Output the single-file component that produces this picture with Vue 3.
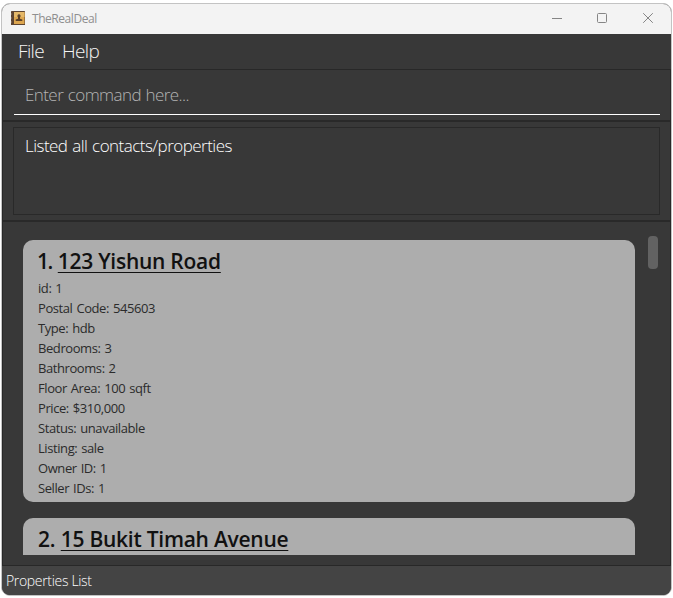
<script setup>
const properties = [
  {
    address: '123 Yishun Road',
    fields: [
      ['id', '1'], ['Postal Code', '545603'], ['Type', 'hdb'], ['Bedrooms', '3'],
      ['Bathrooms', '2'], ['Floor Area', '100 sqft'], ['Price', '$310,000'],
      ['Status', 'unavailable'], ['Listing', 'sale'], ['Owner ID', '1'], ['Seller IDs', '1'],
    ],
  },
  { address: '15 Bukit Timah Avenue', fields: [] },
]
</script>

<template>
  <div class="window">
    <header class="titlebar">
      <svg class="logo" width="14" height="14" viewBox="0 0 14 14">
        <rect width="14" height="14" rx="0.6" fill="#5d4431" />
        <rect x="3" y="1" width="10.5" height="12" fill="#dda64f" />
        <rect x="3" y="1" width="10.5" height="5" fill="#e5b868" />
        <path d="M0 3h1M0 7h1M0 11h1" stroke="#9a8270" />
        <path d="M8 3.300a1.700 1.700 0 0 1 1 3v1.500l2.300.700v1.500H4.700V8.500L7 7.800V6.300a1.700 1.700 0 0 1 1-3z" fill="#5a4028" />
      </svg>
      <span class="app-name">TheRealDeal</span>
      <div class="controls">
        <svg width="12" height="12" viewBox="0 0 12 12"><path d="M1 6.500h10" /></svg>
        <svg width="12" height="12" viewBox="0 0 12 12"><rect x="1.500" y="1.500" width="9" height="9" rx="1" /></svg>
        <svg class="close" width="12" height="12" viewBox="0 0 12 12"><path d="M1.200 1.200l9.600 9.600M10.800 1.200l-9.600 9.600" /></svg>
      </div>
    </header>
    <nav class="menu"><span class="file">File</span><span class="help">Help</span></nav>
    <main class="body">
      <section class="command"><div class="input"><span>Enter command here...</span></div></section>
      <section class="result"><div class="result-box"><span>Listed all contacts/properties</span></div></section>
      <section class="list">
        <div class="cards">
          <article v-for="(p, i) in properties" :key="p.address" class="card">
            <h2><span class="num">{{ i + 1 }}.</span><span class="address">{{ p.address }}</span></h2>
            <p v-for="f in p.fields" :key="f[0]">{{ f[0] }}: {{ f[1] }}</p>
          </article>
        </div>
        <div class="scrollbar"><div class="thumb"></div></div>
      </section>
    </main>
    <footer class="status"><span>Properties List</span></footer>
  </div>
</template>

<style>
body { background: #fff; overflow: hidden; }
</style>

<style scoped>
* { box-sizing: border-box; }
.window {
  width: 671px; height: 593px; margin: 3px 0 0 1px;
  display: flex; flex-direction: column;
  border: 1px solid #c3c3c3; border-radius: 9px; overflow: hidden;
  background: #383838; font-family: "Open Sans", "Noto Sans", sans-serif; white-space: nowrap;
}
.titlebar { height: 30px; flex: none; display: flex; align-items: center; background: #f3f3f3; padding: 0 17px 2px 9px; }
.logo { display: block; }
.app-name { margin: 1px 0 0 7px; font-size: 12px; line-height: 16px; color: #8f8f8f; letter-spacing: -0.45px; }
.controls { margin-left: auto; display: flex; gap: 33px; }
.controls svg { display: block; fill: none; stroke: #858585; stroke-width: 1; }
.controls .close { margin-left: 1px; }
.menu { height: 35px; flex: none; padding-left: 16px; display: flex; gap: 18px; font-size: 19px; line-height: 35px; font-weight: 300; color: #f4f4f4; letter-spacing: -0.65px; }
.body { flex: 1; min-height: 0; display: flex; flex-direction: column; border: 1px solid #282828; }
.command { height: 51px; flex: none; padding: 8px 10px 0 11px; border-bottom: 1px solid #292929; }
.input { height: 37px; border-bottom: 1px solid #fff; padding-left: 11px; font-size: 17px; line-height: 34px; font-weight: 300; color: #b4b4b4; letter-spacing: -0.58px; word-spacing: 0.8px; }
.result { height: 101px; flex: none; padding: 5px 10px 0; border-top: 1px solid #292929; border-bottom: 2px solid #292929; }
.result-box { height: 88px; border: 1px solid #292929; padding: 7px 0 0 11px; font-size: 17px; line-height: 22px; font-weight: 300; color: #fff; letter-spacing: -0.53px; word-spacing: 0.9px; }
.list { flex: 1; min-height: 0; display: flex; padding: 14px 12px 10px 20px; }
.cards { flex: 1; min-height: 0; overflow: hidden; padding-top: 4px; }
.card { width: 612px; height: 262px; margin-bottom: 16px; padding: 8px 15px 0; border-radius: 10px; background: #adadad; color: #2b2b2b; }
h2 { margin: 0; height: 30px; font-size: 21px; line-height: 27px; font-weight: 600; color: #111; display: flex; gap: 5.5px; letter-spacing: -0.26px; }
.card:first-child h2 { gap: 6px; }
.card:first-child .num { margin-left: -1px; letter-spacing: -1.500px; }
.address { text-decoration: underline; text-decoration-thickness: 1px; text-underline-offset: 3px; text-decoration-skip-ink: none; }
p { margin: 0; height: 20px; font-size: 13px; line-height: 20px; letter-spacing: -0.42px; word-spacing: 1px; }
.scrollbar { width: 10px; flex: none; }
.thumb { height: 33px; border-radius: 4px; background: #626262; }
.status { height: 29px; flex: none; background: #444; padding-left: 4px; font-size: 14px; line-height: 30px; font-weight: 300; color: #fff; letter-spacing: -0.33px; }
</style>
